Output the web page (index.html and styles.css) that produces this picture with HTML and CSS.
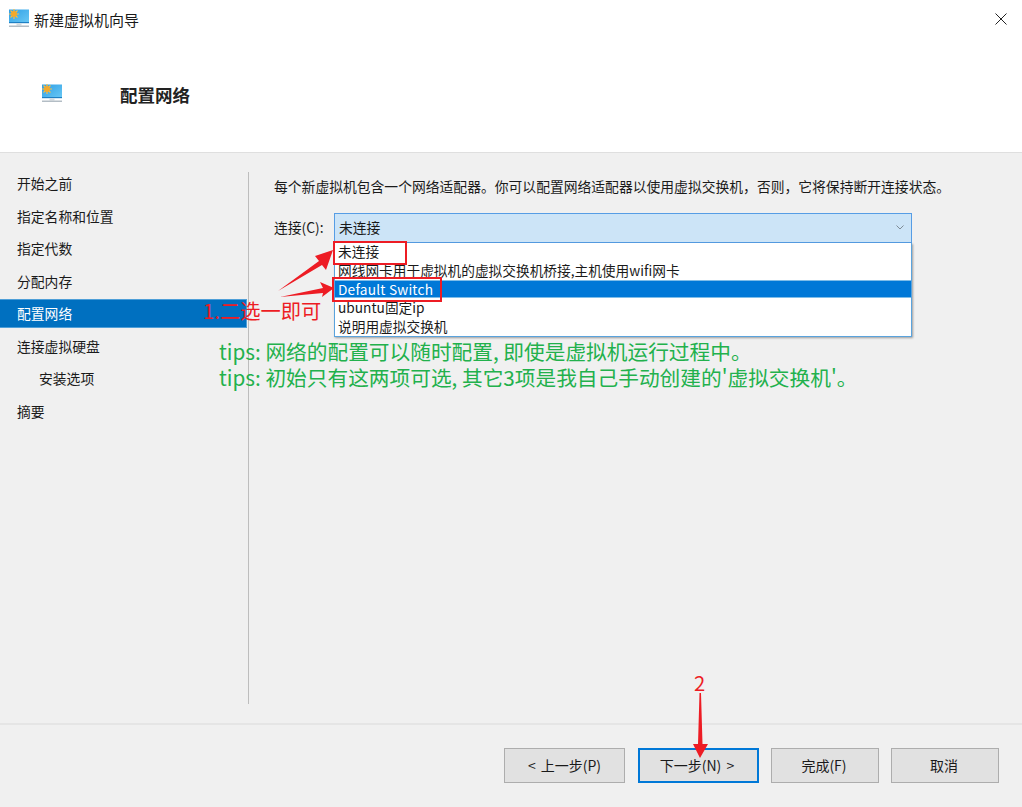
FILE: index.html
```html
<!DOCTYPE html>
<html lang="zh">
<head>
<meta charset="utf-8">
<title>新建虚拟机向导</title>
<link rel="stylesheet" href="styles.css">
</head>
<body>
<div class="window">
  <header class="header">
    <div class="titlebar">
      <svg class="title-icon" viewBox="0 0 20 20"><use href="#monitor"/></svg>
      <span class="title-text">新建虚拟机向导</span>
      <svg class="close" viewBox="0 0 12 12"><path d="M.5.5l11 11M11.500.5l-11 11"/></svg>
    </div>
    <div class="banner">
      <svg class="banner-icon" viewBox="0 0 20 20"><use href="#monitor"/></svg>
      <h1 class="banner-title">配置网络</h1>
    </div>
  </header>
  <main class="main">
    <nav class="nav">
      <div class="nav-item">开始之前</div>
      <div class="nav-item">指定名称和位置</div>
      <div class="nav-item">指定代数</div>
      <div class="nav-item">分配内存</div>
      <div class="nav-item selected">配置网络</div>
      <div class="nav-item">连接虚拟硬盘</div>
      <div class="nav-item sub">安装选项</div>
      <div class="nav-item">摘要</div>
    </nav>
    <section class="content">
      <p class="desc">每个新虚拟机包含一个网络适配器。你可以配置网络适配器以使用虚拟交换机，否则，它将保持断开连接状态。</p>
      <div class="field">
        <label class="field-label">连接(C):</label>
        <div class="combo">
          <div class="combo-box"><span>未连接</span>
            <svg class="chev" viewBox="0 0 8 5"><path d="M.5.5L4 4 7.500.5"/></svg>
          </div>
          <ul class="list">
            <li>未连接</li>
            <li>网线网卡用于虚拟机的虚拟交换机桥接,主机使用wifi网卡</li>
            <li class="active">Default Switch</li>
            <li>ubuntu固定ip</li>
            <li>说明用虚拟交换机</li>
          </ul>
        </div>
      </div>
    </section>
  </main>
  <footer class="footer">
    <button class="btn prev">&lt; 上一步(P)</button>
    <button class="btn next">下一步(N) &gt;</button>
    <button class="btn finish">完成(F)</button>
    <button class="btn cancel">取消</button>
  </footer>
</div>

<div class="note red step1">1.二选一即可</div>
<div class="note green tip1">tips: 网络的配置可以随时配置, 即使是虚拟机运行过程中。</div>
<div class="note green tip2">tips: 初始只有这两项可选, 其它3项是我自己手动创建的'虚拟交换机'。</div>
<div class="note red step2">2</div>
<div class="mark mark1"></div>
<div class="mark mark2"></div>

<svg class="arrows" viewBox="0 0 1022 807">
  <path d="M278 291 L319 261 L315 256 L333 250 L326 270 L322 265 Z"/>
  <path d="M280 297 L323 288 L320 282 L334 288 L322 297 L323 293 Z"/>
  <path d="M699.500 693 L701 693 L702.500 744 L708 744 L700 758 L693 744 L698 744 Z"/>
</svg>

<svg class="defs" width="0" height="0">
  <defs>
    <linearGradient id="screen" x1="0" y1="0" x2="1" y2="1">
      <stop offset="0" stop-color="#2f9fe6"/>
      <stop offset="1" stop-color="#69c8f4"/>
    </linearGradient>
    <g id="monitor">
      <rect x="0" y="0.500" width="20" height="13.500" fill="url(#screen)"/>
      <rect x="0" y="13" width="20" height="1.200" fill="#1f80c4"/>
      <path d="M5 0v10M0 5h10M1.500 1.500l7 7M8.500 1.500l-7 7" stroke="#f8bd42" stroke-width="1.200"/>
      <circle cx="5" cy="5" r="3" fill="#f3a92b"/>
      <rect x="7.500" y="14.200" width="5" height="2.300" fill="#d3dadf"/>
      <rect x="0" y="16.500" width="20" height="1.500" fill="#b3bdc5"/>
    </g>
  </defs>
</svg>
</body>
</html>
```
FILE: styles.css
```css
* { box-sizing: border-box; }
html, body { margin: 0; padding: 0; }
body {
  width: 1022px;
  height: 807px;
  overflow: hidden;
  background: #f0f0f0;
  color: #1a1a1a;
  font-family: "Noto Sans CJK SC", "Noto Sans", sans-serif;
  font-size: 13.800px;
}
.window { display: flex; flex-direction: column; height: 807px; }

.header { height: 153px; background: #fff; border-bottom: 1px solid #dfdfdf; }
.titlebar { display: flex; align-items: center; height: 38px; padding: 0 15px 0 9px; }
.title-icon { width: 20px; height: 20px; margin-right: 5px; }
.title-text { font-size: 15px; flex: 1; }
.close { width: 12px; height: 12px; fill: none; stroke: #222; stroke-width: 1; }
.banner { display: flex; align-items: center; height: 112px; padding-left: 42px; }
.banner-icon { width: 20px; height: 20px; margin-right: 58px; }
.banner-title { margin: 0; font-size: 17.500px; font-weight: 700; color: #222; }

.main { flex: 1; display: flex; }
.nav { width: 248px; padding-top: 14px; }
.nav-item { height: 32.500px; line-height: 32.500px; padding-left: 17px; margin-right: 1px; white-space: nowrap; }
.nav-item.sub { padding-left: 39px; }
.nav-item.selected { height: 29px; line-height: 27px; margin: 2px 1px 1.500px 0; background: #0070c0; border: 1px solid #4f9fd8; border-left: 0; color: #fff; }
.content { flex: 1; margin: 19px 0; border-left: 1px solid #bdbdbd; padding-left: 25px; }
.desc { margin: 0; line-height: 28px; white-space: nowrap; }
.field { display: flex; margin-top: 13px; }
.field-label { width: 60px; line-height: 28px; }
.combo { width: 578px; position: relative; }
.combo-box { height: 30px; background: #cce4f7; border: 1px solid #569de5; padding: 0 0 2px 4px; display: flex; justify-content: space-between; align-items: center; }
.chev { width: 8px; height: 5px; margin-right: 7px; fill: none; stroke: #7f8b96; stroke-width: 1; }
.list { position: absolute; left: 0; right: 0; top: 30px; margin: 0; padding: 0; list-style: none; background: #fff; border: 1px solid #5aa3dd; border-top: 0; box-shadow: 1px 1px 2px rgba(0,0,0,.35); height: 94px; font-size: 13.700px; }
.list li { height: 18.750px; line-height: 18.750px; padding-left: 3px; white-space: nowrap; }
.list li:first-child { height: 17.750px; line-height: 16.750px; }
.list li.active { background: #0078d7; color: #fff; letter-spacing: .2px; border-top: 1px solid #7fbde8; border-bottom: 1px solid #7fbde8; line-height: 17px; }

.footer { height: 84px; border-top: 2px solid #e5e5e5; display: flex; justify-content: flex-end; gap: 12px; padding: 23px 23px 0 0; }
.btn { height: 35px; background: #e1e1e1; border: 1px solid #adadad; font: inherit; font-size: 14px; word-spacing: 2px; color: #1a1a1a; padding: 0 0 2px; }
.prev { width: 121px; margin-right: 1px; }
.next { width: 121px; border: 2px solid #0078d7; padding-right: 3px; }
.finish { width: 108px; padding-right: 2px; }
.cancel { width: 108px; padding-right: 2px; }

.note { position: absolute; white-space: nowrap; }
.red { color: #ed1c24; }
.green { color: #22b14c; font-size: 20.700px; }
.step1 { left: 203px; top: 296px; font-size: 20.300px; line-height: 28px; }
.tip1 { left: 219px; top: 338px; line-height: 26px; }
.tip2 { left: 219px; top: 364px; line-height: 26px; }
.step2 { left: 694px; top: 668px; font-size: 20.300px; line-height: 28px; }
.mark { position: absolute; border: 2px solid #ed1c24; }
.mark1 { left: 333px; top: 241px; width: 74px; height: 24px; }
.mark2 { left: 332px; top: 277px; width: 110px; height: 25px; }
.arrows { position: absolute; left: 0; top: 0; width: 1022px; height: 807px; fill: #ed1c24; pointer-events: none; }
.defs { position: absolute; }
```
